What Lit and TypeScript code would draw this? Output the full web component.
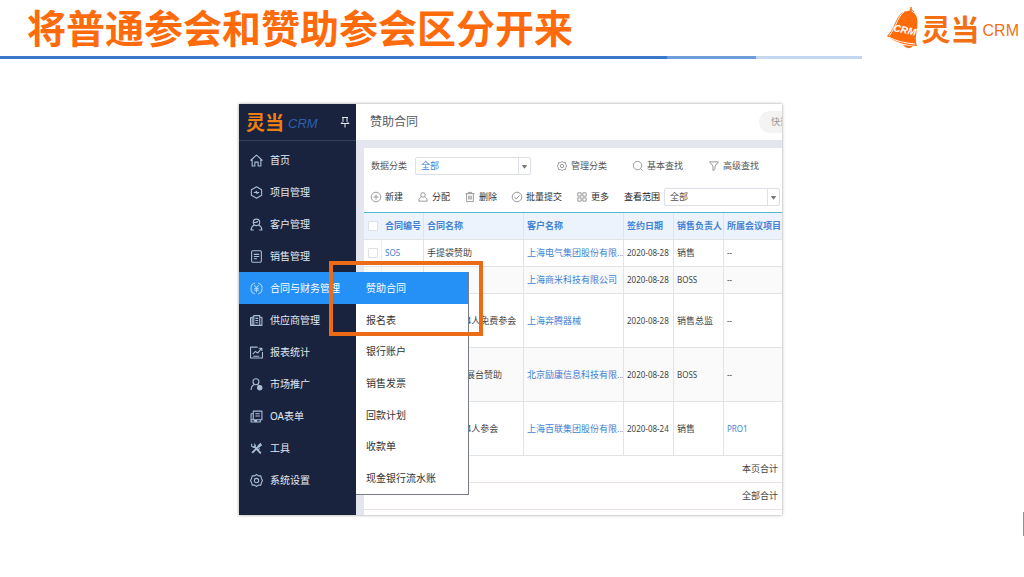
import { LitElement, html, css, svg } from "lit";
import { customElement, property } from "lit/decorators.js";
import { classMap } from "lit/directives/class-map.js";

const glyphs: Record<string, unknown> = {
  home: svg`<path d="M1 12 12 2l11 10M4 10v12h5v-7h6v7h5V10"/>`,
  project: svg`<path d="M12 1.500 21.500 7v10L12 22.500 2.500 17V7zM7 12h3l2-2 1 4 2-2h2"/>`,
  customer: svg`<circle cx="12" cy="8" r="6"/><path d="M7 8c3 1 6 0 8-2M8 13c-4 2-6 5-6 9h5M16 13c4 2 6 5 6 9h-5"/>`,
  sales: svg`<rect x="3" y="1.500" width="18" height="21" rx="2"/><path d="M7 8h10M7 12h10M7 16h6"/>`,
  finance: svg`<path d="M9 2A10.500 10.500 0 0 0 9 22M15 2a10.500 10.500 0 0 1 0 20M8 6l4 5 4-5M12 11v8M8 12h8M8 15h8"/>`,
  supplier: svg`<path d="M7 5 1 7v14h21V6h-4M7 3h11v18H7zM10 8h5M10 12h5M10 16h5M4 7v14"/>`,
  report: svg`<path d="M14 2H1v20h22V11M5 15l5-5 4 3 7-8M16 4h6v5M6 19h11"/>`,
  market: svg`<circle cx="11" cy="7" r="5.500"/><path d="M8 12c-4 2-6 5-6 10M14 12l2 2"/><circle cx="18" cy="18" r="4" fill="currentColor"/>`,
  oa: svg`<path d="M6 2h16v16H6zM6 7H2v15h17v-4M10 7h8M10 11h8M2 18h5l2 2h4"/>`,
  tools: svg`<path d="m7 7 13 14M20 4 4 20" stroke-width="3.500"/><path d="M3 3v5l4 2 3-3-2-4M20 2l-5 5 2 2 5-4M15 14l3-2"/>`,
  gear: svg`<path d="m12 1 3.500 2.500H20l1 4.500 2 4-2 4-1 4.500h-4.500L12 23l-3.500-2.500H4L3 16l-2-4 2-4 1-4.500h4.500z"/><circle cx="12" cy="12" r="4"/>`,
  pin: svg`<path d="M6 3h12M8 3v8l-4 4h16l-4-4V3M12 15v8"/>`,
  search: svg`<circle cx="11" cy="11" r="10"/><path d="m18 18 5 5"/>`,
  filter: svg`<path d="M1.500 2h21l-8 10v7l-5 4V12z"/>`,
  plus: svg`<circle cx="12" cy="12" r="11.500"/><path d="M12 6v12M6 12h12"/>`,
  user: svg`<circle cx="12" cy="7" r="5.500"/><path d="M8 12c-4 1-6 4-6 10h20c0-6-2-9-6-10"/>`,
  trash: svg`<path d="M1 4h22M8 4V1h8v3M4 4v19h16V4M9 9v9M12 9v9M15 9v9"/>`,
  check: svg`<circle cx="12" cy="12" r="11.500"/><path d="m6 12 4 5 8-9"/>`,
  grid: svg`<path d="M2 2h8v8H2zM14 2h8v8h-8zM2 14h8v8H2zM14 14h8v8h-8z"/>`,
};

@customElement("line-icon")
class LineIcon extends LitElement {
  @property() name = "";
  static styles = css`
    :host { display: block; flex: none; width: 12px; height: 12px; }
    .glyph { display: block; width: 100%; height: 100%; fill: none; stroke: currentColor; stroke-width: 2; stroke-linejoin: round; overflow: visible; }
  `;
  render() {
    return html`<svg class="glyph" viewBox="0 0 24 24" aria-hidden="true">${glyphs[this.name]}</svg>`;
  }
}

@customElement("brand-logo")
class BrandLogo extends LitElement {
  static styles = css`
    :host { display: flex; align-items: center; color: #f26f14; }
    .bell { width: 34px; height: 44px; flex: none; overflow: visible; }
    .mark { font: italic bold 10px "Liberation Sans", sans-serif; fill: #fff; }
    .name { font: bold 29px/34px "Noto Sans CJK SC", sans-serif; margin-left: 2px; }
    .latin { font: 16px/24px "Liberation Sans", sans-serif; margin: 6px 0 0 3px; }
  `;
  render() {
    return html`
      <svg class="bell" viewBox="0 0 34 44" aria-hidden="true">
        <path d="M25 6V1" stroke="#f26f14" stroke-width="1.500" fill="none"/>
        <path d="M22 6q3-5 6 0" stroke="#f26f14" fill="none"/>
        <path d="M24 5C15 4 12 11 9 17C7 23 4 27 1 30C9 36 18 39 31 40C29 35 30 29 31 23C32 14 32 7 24 5Z" fill="#ff6a0a"/>
        <path d="M18 6C11 11 10 22 3 30M3 31c7 4 15 6 26 7" stroke="#fff" stroke-width="1" fill="none"/>
        <path d="M17 39q5 6 10 1z" fill="#f26f14"/>
        <text class="mark" x="7" y="25" transform="rotate(12 7 25)">CRM</text>
      </svg>
      <span class="name">灵当</span><span class="latin">CRM</span>
    `;
  }
}

const menu = [
  ["home", "首页"], ["project", "项目管理"], ["customer", "客户管理"], ["sales", "销售管理"],
  ["finance", "合同与财务管理"], ["supplier", "供应商管理"], ["report", "报表统计"],
  ["market", "市场推广"], ["oa", "OA表单"], ["tools", "工具"], ["gear", "系统设置"],
];
const submenu = ["赞助合同", "报名表", "银行账户", "销售发票", "回款计划", "收款单", "现金银行流水账"];
const columns = ["合同编号", "合同名称", "客户名称", "签约日期", "销售负责人", "所属会议项目"];
const rows = [
  { id: "SO5", title: "手提袋赞助", client: "上海电气集团股份有限...", date: "2020-08-28", owner: "销售", project: "--" },
  { id: "", title: "", client: "上海商米科技有限公司", date: "2020-08-28", owner: "BOSS", project: "--" },
  { id: "", title: "4人免费参会", client: "上海奔腾器械", date: "2020-08-28", owner: "销售总监", project: "--", tall: true },
  { id: "", title: "展台赞助", client: "北京励康信息科技有限...", date: "2020-08-28", owner: "BOSS", project: "--", tall: true },
  { id: "", title: "4人参会", client: "上海百联集团股份有限...", date: "2020-08-24", owner: "销售", project: "PRO1", tall: true },
];

@customElement("crm-window")
class CrmWindow extends LitElement {
  static styles = css`
    :host { display: block; position: relative; font: 9px/12px "Noto Sans", "Noto Sans CJK SC", sans-serif; color: #444; }
    * { box-sizing: border-box; }
    a { color: inherit; text-decoration: none; }
    button { display: flex; align-items: center; gap: 4px; border: 0; padding: 0; background: none; font: inherit; color: inherit; white-space: nowrap; }
    .window { display: grid; grid-template-columns: 117px minmax(0, 1fr); overflow: hidden; background: #e3e6ef; box-shadow: 0 0 3px #0006; }
    .side { background: #19233d; color: #e4e8f0; font-size: 10px; line-height: 14px; }
    .brand { display: flex; align-items: center; height: 37px; padding: 0 5px 0 7px; border-bottom: 1px solid #353e56; }
    .brand-name { font: bold 19px/24px "Noto Sans CJK SC", sans-serif; color: #ee8013; }
    .brand-latin { flex: 1; padding: 4px 0 0 4px; font: italic 13px/16px "Liberation Sans", sans-serif; color: #2c5fae; }
    .nav { display: grid; padding-top: 3px; }
    .nav-item { display: flex; align-items: center; gap: 7px; height: 32px; padding-left: 11px; white-space: nowrap; }
    .nav-item line-icon { width: 13px; height: 13px; color: #a9bfd6; }
    .active { background: #2590f5; color: #fff; }
    .active line-icon { color: #a9d4fb; }
    .top { display: flex; align-items: center; height: 36px; padding-left: 14px; background: #fff; overflow: hidden; }
    .heading { flex: 1; margin: 0; font-weight: 400; font-size: 12px; line-height: 16px; color: #555b66; }
    .quick { flex: none; width: 23px; height: 22px; padding-left: 12px; border-radius: 11px 0 0 11px; background: #f3f3f3; color: #999; overflow: hidden; }
    .card { margin: 8px 0 0 8px; padding-bottom: 5px; background: #fff; }
    .tools { display: flex; align-items: center; height: 31px; padding-left: 7px; white-space: nowrap; }
    .filters { height: 34px; padding-top: 2px; gap: 26px; color: #555; }
    .actions { height: 30px; gap: 15px; color: #333; }
    .tools line-icon { width: 10px; height: 10px; color: #888; }
    .field { display: flex; align-items: center; gap: 8px; }
    .actions .field { gap: 4px; color: #222; }
    .picker { position: relative; display: block; width: 116px; }
    .select { display: block; appearance: none; width: 100%; height: 18px; padding: 0 16px 0 5px; border: 1px solid #dcdfe5; border-radius: 2px; background: #fff; font: inherit; color: #555; }
    .filters .select { color: #3d82dc; }
    .arrow { position: absolute; top: 1px; right: 1px; width: 12px; height: 16px; border-left: 1px solid #dcdfe5; pointer-events: none; fill: #777; }
    .table { width: 100%; border-collapse: separate; border-spacing: 0; table-layout: fixed; border-top: 1px solid #4fb8cc; }
    .table th, .table td { height: 27px; padding: 0 0 0 3px; border-bottom: 1px solid #e1e3e7; border-right: 1px solid #e1e3e7; text-align: left; white-space: nowrap; overflow: hidden; }
    .table th:last-child, .table td:last-child { border-right: 0; }
    .table th { background: #edf3fc; color: #4482d6; font-weight: 600; }
    .even td { background: #fafafa; }
    .table .tall td { height: 54px; }
    .check { width: 18px; }
    .number { width: 42px; }
    .wide { width: 100px; }
    .narrow { width: 50px; }
    .table .tick { padding: 0 0 0 4px; border-right-color: #edeff3; }
    .box { display: block; appearance: none; width: 10px; height: 10px; margin: 0; border: 1px solid #dde1e7; border-radius: 1px; background: #fff; }
    .link { color: #3d7fd2; }
    .latin { font-size: 8px; }
    .table .tail { padding-left: 42px; }
    .table .sum { padding-right: 4px; text-align: right; border-bottom-color: #e9e2e0; }
    .popup { position: absolute; left: 117px; top: 168px; width: 113px; height: 223px; display: grid; grid-auto-rows: 1fr; background: #fff; border: solid #777c86; border-width: 0 1px 1px 0; font-size: 10px; line-height: 14px; color: #333; }
    .popup-item { display: flex; align-items: center; padding-left: 10px; }
    .marker { position: absolute; left: 90px; top: 157px; width: 154px; height: 75px; border: 4px solid #ec6b17; pointer-events: none; }
  `;

  private cell(value: string) {
    return /^[\w-]+$/.test(value) ? html`<span class="latin">${value}</span>` : value;
  }

  private action(icon: string, text: string) {
    return html`<button type="button"><line-icon name=${icon}></line-icon>${text}</button>`;
  }

  private picker(id: string) {
    return html`<span class="picker"><select class="select" id=${id}><option>全部</option></select>
      <svg class="arrow" viewBox="0 0 12 16" aria-hidden="true"><path d="M3 7h6l-3 4z"/></svg></span>`;
  }

  render() {
    return html`
      <div class="window">
        <aside class="side">
          <div class="brand"><span class="brand-name">灵当</span><span class="brand-latin">CRM</span><line-icon name="pin"></line-icon></div>
          <nav class="nav">
            ${menu.map(([icon, text]) => html`<a href="#" class=${classMap({ "nav-item": true, active: icon === "finance" })}><line-icon name=${icon}></line-icon>${text}</a>`)}
          </nav>
        </aside>
        <section>
          <div class="top"><h2 class="heading">赞助合同</h2><button type="button" class="quick">快速</button></div>
          <div class="card">
            <div class="tools filters">
              <span class="field"><label for="category">数据分类</label>${this.picker("category")}</span>
              ${this.action("gear", "管理分类")}${this.action("search", "基本查找")}${this.action("filter", "高级查找")}
            </div>
            <div class="tools actions">
              ${this.action("plus", "新建")}${this.action("user", "分配")}${this.action("trash", "删除")}${this.action("check", "批量提交")}${this.action("grid", "更多")}
              <span class="field"><label for="scope">查看范围</label>${this.picker("scope")}</span>
            </div>
            <table class="table">
              <colgroup><col class="check"><col class="number"><col class="wide"><col class="wide"><col class="narrow"><col class="narrow"><col></colgroup>
              <thead><tr><th class="tick"><input class="box" type="checkbox" aria-label="全选"></th>${columns.map((c) => html`<th>${c}</th>`)}</tr></thead>
              <tbody>
                ${rows.map((r, i) => html`<tr class=${classMap({ tall: !!r.tall, even: i % 2 === 1 })}>
                  <td class="tick"><input class="box" type="checkbox" aria-label=${r.client}></td>
                  <td class="link">${this.cell(r.id)}</td>
                  <td class=${classMap({ tail: !!r.tall })}>${r.title}</td>
                  <td><a class="link" href="#">${r.client}</a></td>
                  <td>${this.cell(r.date)}</td>
                  <td>${this.cell(r.owner)}</td>
                  <td class=${classMap({ link: r.project !== "--" })}>${this.cell(r.project)}</td>
                </tr>`)}
              </tbody>
              <tfoot><tr><td class="sum" colspan="7">本页合计</td></tr><tr><td class="sum" colspan="7">全部合计</td></tr></tfoot>
            </table>
          </div>
        </section>
      </div>
      <nav class="popup">
        ${submenu.map((text, i) => html`<a href="#" class=${classMap({ "popup-item": true, active: i === 0 })}>${text}</a>`)}
      </nav>
      <div class="marker"></div>
    `;
  }
}

@customElement("app-root")
class AppRoot extends LitElement {
  static styles = css`
    :host { display: block; position: relative; min-height: 100vh; background: #fff; }
    .header { display: flex; align-items: flex-start; justify-content: space-between; height: 56px; padding: 0 5px 0 27px; }
    .title { margin: 0; font: bold 39px/52px "Noto Sans CJK SC", sans-serif; color: #ff6a0a; white-space: nowrap; }
    .logo { margin-top: 6px; }
    .rule { display: grid; grid-template-columns: 667fr 89fr 106fr 162fr; height: 3px; }
    .deep { background: #3b78c9; }
    .mid { background: #6c9cda; }
    .pale { background: #c5d7f0; }
    .stage { padding: 45px 242px 0 239px; }
    .tab { position: absolute; right: 0; top: 512px; width: 1px; height: 24px; background: #3fb0d4; }
  `;
  render() {
    return html`
      <header class="header"><h1 class="title">将普通参会和赞助参会区分开来</h1><brand-logo class="logo"></brand-logo></header>
      <div class="rule"><span class="deep"></span><span class="mid"></span><span class="pale"></span></div>
      <main class="stage"><crm-window></crm-window></main>
      <div class="tab"></div>
    `;
  }
}
